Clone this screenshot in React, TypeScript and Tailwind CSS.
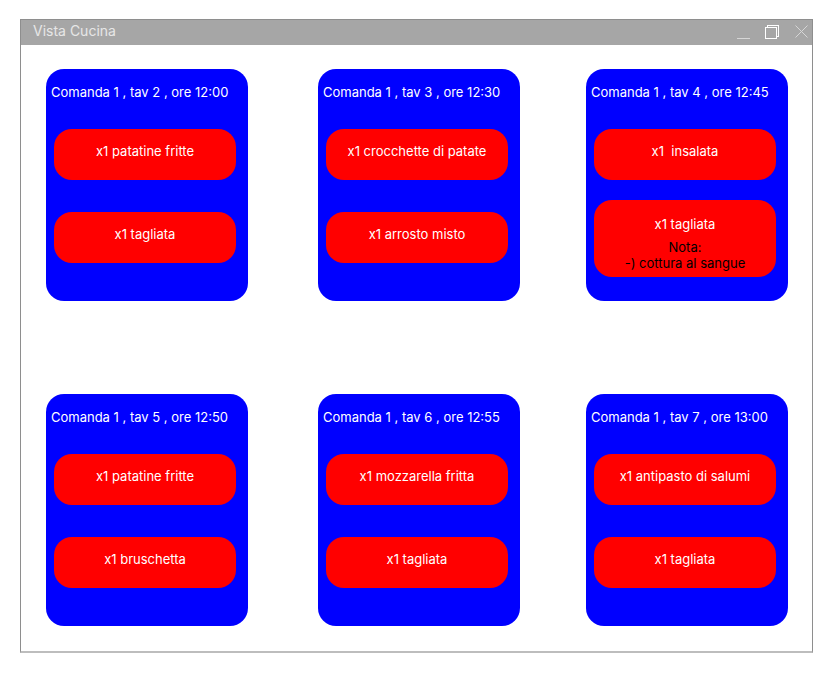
import React from "react";

type Item = { text: string; note?: string[] };
type Order = { header: string; items: Item[] };

const orders: Order[] = [
  { header: "Comanda 1 , tav 2 , ore 12:00", items: [{ text: "x1 patatine fritte" }, { text: "x1 tagliata" }] },
  { header: "Comanda 1 , tav 3 , ore 12:30", items: [{ text: "x1 crocchette di patate" }, { text: "x1 arrosto misto" }] },
  {
    header: "Comanda 1 , tav 4 , ore 12:45",
    items: [{ text: "x1  insalata" }, { text: "x1 tagliata", note: ["Nota:", "-) cottura al sangue"] }],
  },
  { header: "Comanda 1 , tav 5 , ore 12:50", items: [{ text: "x1 patatine fritte" }, { text: "x1 bruschetta" }] },
  { header: "Comanda 1 , tav 6 , ore 12:55", items: [{ text: "x1 mozzarella fritta" }, { text: "x1 tagliata" }] },
  { header: "Comanda 1 , tav 7 , ore 13:00", items: [{ text: "x1 antipasto di salumi" }, { text: "x1 tagliata" }] },
];

function Card({ order }: { order: Order }) {
  return (
    <div className="w-[202px] h-[232px] bg-[#0000ff] rounded-[18px] flex flex-col pl-[8px] pr-[12px]">
      <div className="mt-[15px] -ml-[3px] h-[16px] leading-[16px] text-[13px] text-white whitespace-nowrap">
        {order.header}
      </div>
      {order.items.map((it, i) => {
        if (it.note) {
          return (
            <div
              key={i}
              className="mt-[20px] h-[77px] w-[182px] bg-[#ff0000] rounded-[18px] flex flex-col items-center pt-[16px] text-[13px]"
            >
              <div className="text-white leading-[16px]">{it.text}</div>
              <div className="mt-[7px] text-black leading-[16px] text-center">
                {it.note.map((n, j) => (
                  <div key={j}>{n}</div>
                ))}
              </div>
            </div>
          );
        }
        return (
          <div
            key={i}
            className={`${i === 0 ? "mt-[29px]" : "mt-[32px]"} h-[51px] w-[182px] bg-[#ff0000] rounded-[18px] flex items-center justify-center pb-[6px] text-[13px] text-white whitespace-pre`}
          >
            {it.text}
          </div>
        );
      })}
    </div>
  );
}

function Row({ items }: { items: Order[] }) {
  return (
    <div className="flex">
      <Card order={items[0]} />
      <div className="ml-[70px]">
        <Card order={items[1]} />
      </div>
      <div className="ml-[66px]">
        <Card order={items[2]} />
      </div>
    </div>
  );
}

export default function App() {
  return (
    <div
      className="w-[832px] h-[681px] bg-white pt-[19px] pl-[20px]"
      style={{ fontFamily: "Inter, 'Noto Sans', sans-serif" }}
    >
      <div className="w-[793px] h-[634px] border border-[#8e8e8e] border-b-[#bdbdbd] border-b-2 flex flex-col">
        <div className="h-[25px] bg-[#a6a6a6] flex items-center pl-[12px] pb-[3px] relative">
          <span className="text-[14px] text-[#e6e6e6] leading-none">Vista Cucina</span>
          <svg className="absolute left-[716px] top-[4px]" width="13" height="16" viewBox="0 0 13 16">
            <line x1="0" y1="14.5" x2="13" y2="14.5" stroke="#d6d6d6" strokeWidth="1" />
          </svg>
          <svg className="absolute left-[744px] top-[5px]" width="16" height="16" viewBox="0 0 16 16">
            <rect x="2.5" y="0.5" width="11" height="11" fill="none" stroke="#ffffff" strokeWidth="1" />
            <rect x="0.5" y="2.5" width="11" height="11" fill="#a6a6a6" stroke="#ffffff" strokeWidth="1" />
          </svg>
          <svg className="absolute left-[774px] top-[5px]" width="14" height="14" viewBox="0 0 14 14">
            <line x1="0.5" y1="0.5" x2="12.5" y2="12.5" stroke="#d6d6d6" strokeWidth="1" />
            <line x1="12.5" y1="0.5" x2="0.5" y2="12.5" stroke="#d6d6d6" strokeWidth="1" />
          </svg>
        </div>
        <div className="flex-1 pl-[25px] pt-[24px] flex flex-col gap-[93px]">
          <Row items={orders.slice(0, 3)} />
          <Row items={orders.slice(3)} />
        </div>
      </div>
    </div>
  );
}
